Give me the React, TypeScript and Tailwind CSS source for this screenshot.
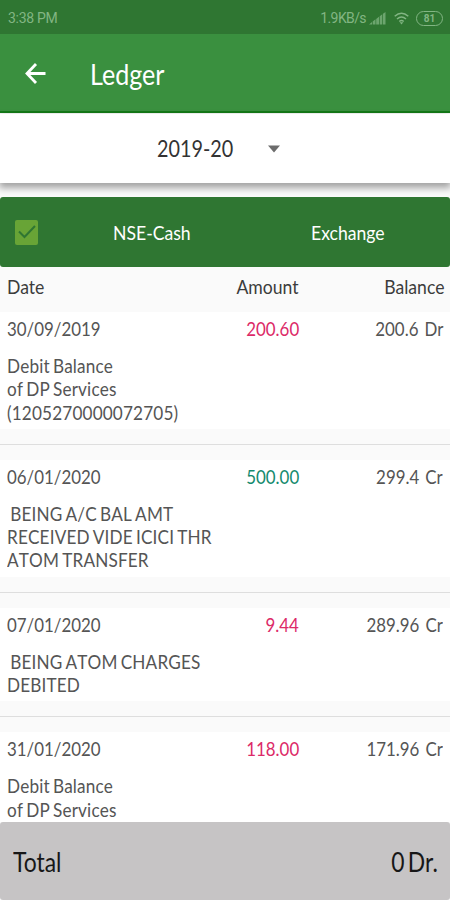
import type { ReactNode } from "react";

type Entry = {
  date: string;
  amount: string;
  credit?: boolean;
  balance: string;
  lines: string[];
};

const entries: Entry[] = [
  { date: "30/09/2019", amount: "200.60", balance: "200.6 Dr", lines: ["Debit Balance", "of DP Services", "(1205270000072705)"] },
  { date: "06/01/2020", amount: "500.00", credit: true, balance: "299.4 Cr", lines: [" BEING A/C BAL AMT", "RECEIVED VIDE ICICI THR", "ATOM TRANSFER"] },
  { date: "07/01/2020", amount: "9.44", balance: "289.96 Cr", lines: [" BEING ATOM CHARGES", "DEBITED"] },
  { date: "31/01/2020", amount: "118.00", balance: "171.96 Cr", lines: ["Debit Balance", "of DP Services"] },
];

export default function App() {
  return (
    <div className="flex h-[900px] w-[450px] flex-col overflow-hidden bg-[#fafafa] font-['Lato',sans-serif] text-[#3c3c3c]">
      <StatusBar />
      <header className="flex h-[79px] shrink-0 items-center border-b-2 border-[#147a18] bg-[#3a903f] pl-[25px] text-white">
        <svg width="22" height="24" viewBox="0 0 22 24" fill="none" stroke="currentColor" strokeWidth="2.8">
          <path d="M20.5 12.5H2.5M11 3 2 12.5l9 9.5" />
        </svg>
        <h1 className="ml-[43px] pt-[2px] text-[28.5px] leading-8 font-normal">
          <Narrow>Ledger</Narrow>
        </h1>
      </header>

      <button className="z-10 mt-px flex h-[69px] shrink-0 items-center bg-white pl-[157px] text-[22.5px] text-[#333] shadow-[0_4px_7px_1px_rgba(0,0,0,0.35)]">
        <span className="w-[111px] pt-px text-left"><Narrow>2019-20</Narrow></span>
        <svg width="12" height="8" viewBox="0 0 12 8" fill="#6c6c6c">
          <path d="M0 0.5h12L6 7.5z" />
        </svg>
      </button>

      <div className="mt-[14px] flex h-[70px] shrink-0 items-center rounded-[3px] bg-[#2f7632] pl-[15px] text-[20px] text-white">
        <span className="flex h-[25px] w-[23px] items-center justify-center rounded-[2px] bg-[#68a436]">
          <svg width="18" height="14" viewBox="0 0 18 14" fill="none" stroke="#2f7632" strokeWidth="2">
            <path d="M1 6.5 6.5 12 17 1" />
          </svg>
        </span>
        <span className="ml-[75px] w-[198px]"><Narrow>NSE-Cash</Narrow></span>
        <Narrow>Exchange</Narrow>
      </div>

      <div className="grid h-[45px] shrink-0 grid-cols-[150px_142px_1fr] pt-[4px] pr-[6px] pl-[7px] text-[20px] leading-[30px]">
        <Narrow>Date</Narrow>
        <span className="text-right"><Narrow end>Amount</Narrow></span>
        <span className="text-right"><Narrow end>Balance</Narrow></span>
      </div>

      <main className="flex min-h-0 flex-1 flex-col overflow-hidden">
        {entries.map((entry) => <LedgerEntry key={entry.date} entry={entry} />)}
      </main>

      <footer className="flex h-[78px] shrink-0 items-center justify-between rounded-[3px] bg-[#c6c4c5] pt-[2px] pr-[12px] pl-[13px] text-[26px] text-[#171717]">
        <Narrow>Total</Narrow>
        <span className="[word-spacing:-3px]"><Narrow end>0 Dr.</Narrow></span>
      </footer>
    </div>
  );
}

function LedgerEntry({ entry }: { entry: Entry }) {
  return (
    <section className="shrink-0 border-b border-[#dedede] pb-[15px] text-[#555] not-first:pt-[15px]">
      <div className="bg-white pb-[5px]">
        <div className="grid h-[42px] grid-cols-[150px_142px_1fr] pt-[2px] pr-[7px] pl-[7px] text-[19.2px] leading-[30px]">
          <Narrow>{entry.date}</Narrow>
          <span className={entry.credit ? "text-right text-[#158a6e]" : "text-right text-[#dc2a68]"}>
            <Narrow end>{entry.amount}</Narrow>
          </span>
          <span className="text-right [word-spacing:2px]"><Narrow end>{entry.balance}</Narrow></span>
        </div>
        <div className="pl-[7px] text-[19.5px] leading-[23.3px] tracking-[0.18px] [font-kerning:none] [word-spacing:-1.6px]">
          {entry.lines.map((line) => (
            <div key={line} className="whitespace-pre"><Narrow>{line}</Narrow></div>
          ))}
        </div>
      </div>
    </section>
  );
}

// Condensed label, squeezed towards the edge it is aligned to.
function Narrow({ children, end }: { children: ReactNode; end?: boolean }) {
  return (
    <span className={end ? "inline-block origin-right scale-x-[0.88] whitespace-pre" : "inline-block origin-left scale-x-[0.88] justify-self-start whitespace-pre"}>
      {children}
    </span>
  );
}

function StatusBar() {
  return (
    <div className="flex h-[34px] shrink-0 items-center bg-[#2f7632] pt-[2px] pr-[7px] pl-[8px] font-['Roboto',sans-serif] text-[14px] text-[#82b583]">
      <span className="flex-1 tracking-[-0.3px]">3:38 PM</span>
      <span className="text-[14px] tracking-[-0.6px]">1.9KB/s</span>
      <svg className="ml-[3px]" width="17" height="13" viewBox="0 0 17 13" fill="currentColor">
        <path d="M0 12.5 3 10v2.5zM3.7 9.5l2.8-2.2v5.2H3.7zM7.2 6.9 10 4.8v7.7H7.2zM10.7 4.3l2.6-2v10.2h-2.6zM14 1.8 16.5 0v12.5H14z" opacity=".75" />
      </svg>
      <svg className="ml-[8px]" width="15" height="13" viewBox="0 0 15 13" fill="none" stroke="currentColor" strokeWidth="1.5">
        <path d="M.7 4.3q6.8-6 13.6 0M3 7q4.5-4 9 0M5.3 9.5q2.2-1.8 4.4 0" />
        <path d="M5.7 10.2h3.6L7.5 12.5z" fill="currentColor" stroke="none" />
      </svg>
      <span className="ml-[7px] flex h-[15px] w-[27px] items-center justify-center rounded-full border-[1.5px] border-[#82b583] text-[10px] font-bold">81</span>
    </div>
  );
}
